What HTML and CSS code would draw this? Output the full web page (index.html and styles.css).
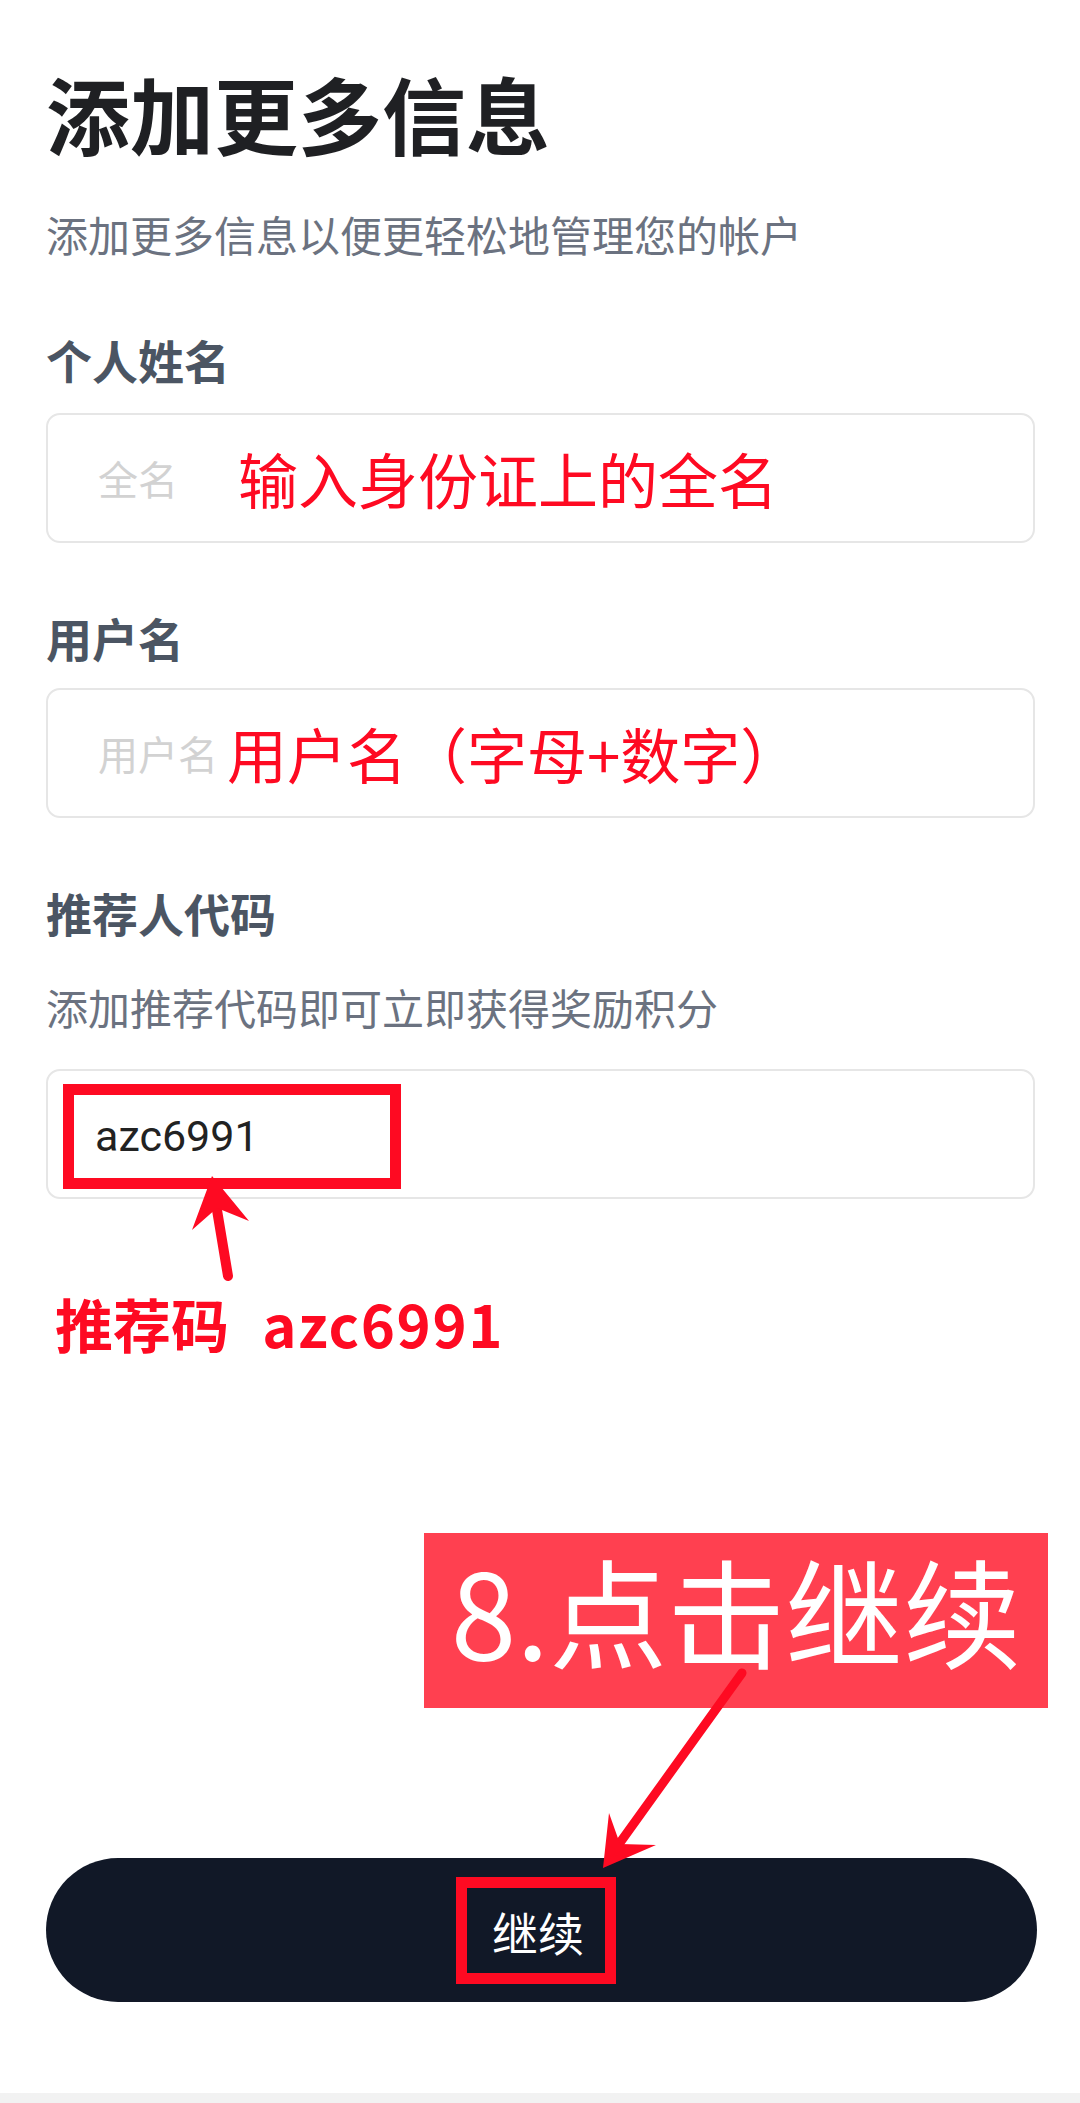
FILE: index.html
```html
<!DOCTYPE html>
<html lang="zh-CN">
<head>
<meta charset="utf-8">
<title>添加更多信息</title>
<link rel="stylesheet" href="styles.css">
</head>
<body>
<div class="page">
  <main class="content">
    <h1 class="title">添加更多信息</h1>
    <p class="subtitle">添加更多信息以便更轻松地管理您的帐户</p>

    <section class="field field-name">
      <div class="label">个人姓名</div>
      <div class="input input-name">
        <span class="placeholder">全名</span>
        <span class="note note-name">输入身份证上的全名</span>
      </div>
    </section>

    <section class="field field-user">
      <div class="label">用户名</div>
      <div class="input input-user">
        <span class="placeholder">用户名</span>
        <span class="note note-user">用户名（字母+数字）</span>
      </div>
    </section>

    <section class="field field-ref">
      <div class="label">推荐人代码</div>
      <p class="hint">添加推荐代码即可立即获得奖励积分</p>
      <div class="input input-ref">
        <span class="code-box"><span class="code-value">azc6991</span></span>
      </div>
    </section>

    <p class="ref-note">推荐码 <span class="ref-code">azc6991</span></p>

    <div class="callout">8.点击继续</div>

    <div class="continue-btn"><span class="btn-label">继续</span></div>
  </main>
  <div class="bottom-bar"></div>

  <svg class="overlay" viewBox="0 0 1080 2103" width="1080" height="2103" aria-hidden="true">
    <line x1="228" y1="1276" x2="214" y2="1192" stroke="#fe0a22" stroke-width="10" stroke-linecap="round"/>
    <polygon points="212,1176 192,1230 217,1208 249,1221" fill="#fe0a22"/>
    <line x1="742" y1="1673" x2="614" y2="1851" stroke="#fe0a22" stroke-width="9" stroke-linecap="round"/>
    <polygon points="603,1868 609,1813 620,1844 656,1845" fill="#fe0a22"/>
  </svg>
</div>
</body>
</html>
```

FILE: styles.css
```css
* {
  box-sizing: border-box;
}

html, body {
  margin: 0;
  padding: 0;
  background: #ffffff;
}

body {
  font-family: "Noto Sans CJK SC", "Noto Sans", sans-serif;
}

.page {
  position: relative;
  width: 1080px;
  height: 2103px;
  overflow: hidden;
  background: #ffffff;
}

.content {
  display: flex;
  flex-direction: column;
  padding: 63px 45px 91px 46px;
}

.title {
  margin: 0;
  font-size: 84px;
  line-height: 100px;
  font-weight: 700;
  color: #1f2023;
}

.subtitle {
  margin: 41px 0 0;
  font-size: 42px;
  line-height: 60px;
  font-weight: 400;
  color: #6b7280;
}

.field {
  display: flex;
  flex-direction: column;
}

.field-name {
  margin-top: 63px;
}

.field-user,
.field-ref {
  margin-top: 62px;
}

.label {
  font-size: 46px;
  line-height: 64px;
  font-weight: 700;
  color: #4b5563;
}

.hint {
  margin: 33px 0 0;
  font-size: 42px;
  line-height: 60px;
  color: #6b7280;
}

.input {
  display: flex;
  align-items: center;
  height: 130px;
  border: 2px solid #e6e6e6;
  border-radius: 14px;
  padding-left: 50px;
  background: #ffffff;
}

.input-name {
  margin-top: 22px;
}

.input-user {
  margin-top: 19px;
}

.input-ref {
  margin-top: 32px;
  padding-left: 15px;
}

.placeholder {
  font-size: 40px;
  line-height: 1;
  color: #d2d2d2;
}

.note {
  font-size: 60px;
  line-height: 1;
  color: #fe0a22;
}

.note-name {
  margin-left: 60px;
}

.note-user {
  margin-left: 9px;
}

.code-box {
  display: flex;
  align-items: center;
  width: 338px;
  height: 105px;
  margin-top: 4px;
  border: 11px solid #fe0a22;
  padding-left: 21px;
}

.code-value {
  font-family: "Roboto", "Noto Sans CJK SC", sans-serif;
  font-size: 43px;
  line-height: 1;
  color: #222222;
}

.ref-note {
  margin: 89px 0 0 9px;
  font-size: 58px;
  line-height: 70px;
  font-weight: 700;
  color: #fe0a22;
}

.ref-code {
  margin-left: 20px;
  letter-spacing: 1.6px;
}

.callout {
  align-self: flex-end;
  margin-top: 175px;
  margin-right: -13px;
  width: 624px;
  height: 175px;
  padding-bottom: 24px;
  background: #ff4050;
  color: #ffffff;
  font-size: 118px;
  line-height: 151px;
  font-weight: 400;
  text-align: center;
  white-space: nowrap;
}

.continue-btn {
  display: flex;
  align-items: center;
  justify-content: center;
  margin-top: 150px;
  margin-right: -2px;
  height: 144px;
  border-radius: 72px;
  background: #111827;
}

.btn-label {
  margin-right: 11px;
  border: 11px solid #fe0a22;
  padding: 20px 21px 19px 25px;
  font-size: 46px;
  line-height: 46px;
  color: #ffffff;
}

.bottom-bar {
  height: 10px;
  background: #f2f2f2;
}

.overlay {
  position: absolute;
  top: 0;
  left: 0;
  pointer-events: none;
}
```
